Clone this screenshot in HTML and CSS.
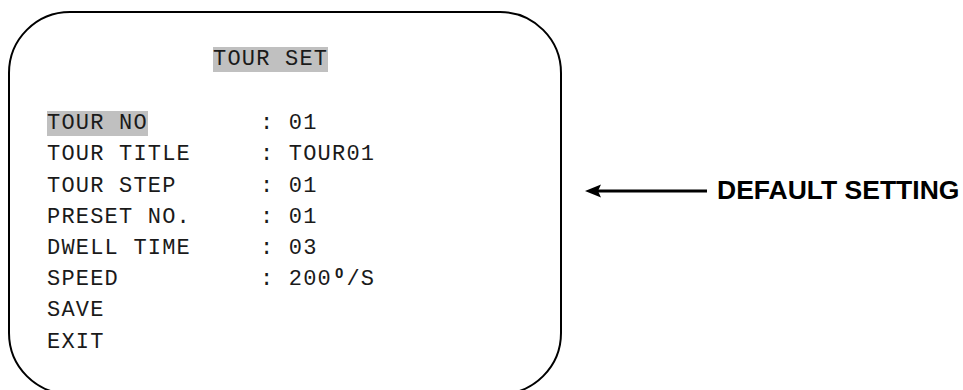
FILE: index.html
```html
<!DOCTYPE html>
<html lang="en">
<head>
    <meta charset="UTF-8">
    <meta name="viewport" content="width=device-width, initial-scale=1.0">
    <title>Tour Set</title>
    <link rel="stylesheet" href="styles.css">
</head>
<body>
    <div class="screen">
        <div class="menu-title"><span class="hl">TOUR SET</span></div>
        <div class="menu">
            <div class="row"><span class="label"><span class="hl">TOUR NO</span></span><span class="value">: 01</span></div>
            <div class="row"><span class="label">TOUR TITLE</span><span class="value">: TOUR01</span></div>
            <div class="row"><span class="label">TOUR STEP</span><span class="value">: 01</span></div>
            <div class="row"><span class="label">PRESET NO.</span><span class="value">: 01</span></div>
            <div class="row"><span class="label">DWELL TIME</span><span class="value">: 03</span></div>
            <div class="row"><span class="label">SPEED</span><span class="value">: 200<span class="deg">0</span>/S</span></div>
            <div class="row"><span class="label">SAVE</span></div>
            <div class="row"><span class="label">EXIT</span></div>
        </div>
    </div>

    <div class="note">
        <svg class="arrow" width="122" height="16" viewBox="0 0 122 16">
            <line x1="12" y1="8" x2="122" y2="8" stroke="#000" stroke-width="3"/>
            <polygon points="0,8 16,1.5 13,8 16,14.5" fill="#000"/>
        </svg>
        <span class="note-text">DEFAULT SETTING</span>
    </div>
</body>
</html>
```

FILE: styles.css
```css
body {
    margin: 0;
    background: #fff;
    display: flex;
    align-items: flex-start;
    height: 390px;
    overflow: hidden;
}

.screen {
    box-sizing: border-box;
    width: 554px;
    height: 384px;
    margin: 11px 0 0 8px;
    border: 2px solid #000;
    border-radius: 62px;
    padding: 31px 0 0 37px;
    font-family: "Liberation Mono", monospace;
    font-size: 22px;
    letter-spacing: 1.2px;
    line-height: 31.2px;
    color: #1a1a1a;
    flex-shrink: 0;
}

.menu-title {
    padding-left: 166px;
}

.hl {
    background: #c0c0c0;
}

.menu {
    margin-top: 33px;
}

.row {
    display: grid;
    grid-template-columns: 213px auto;
    white-space: pre;
}

.deg {
    display: inline-block;
    width: 14.4px;
    font-family: "Liberation Sans", sans-serif;
    font-weight: bold;
    font-size: 15px;
    letter-spacing: 0;
    vertical-align: 7px;
    line-height: 1;
    text-align: center;
}

.note {
    display: flex;
    align-items: center;
    margin: 175px 0 0 23px;
}

.arrow {
    display: block;
    flex-shrink: 0;
}

.note-text {
    margin-left: 10px;
    font-family: "Liberation Sans", Arial, sans-serif;
    font-weight: bold;
    font-size: 26.5px;
    white-space: nowrap;
    color: #000;
}
```
